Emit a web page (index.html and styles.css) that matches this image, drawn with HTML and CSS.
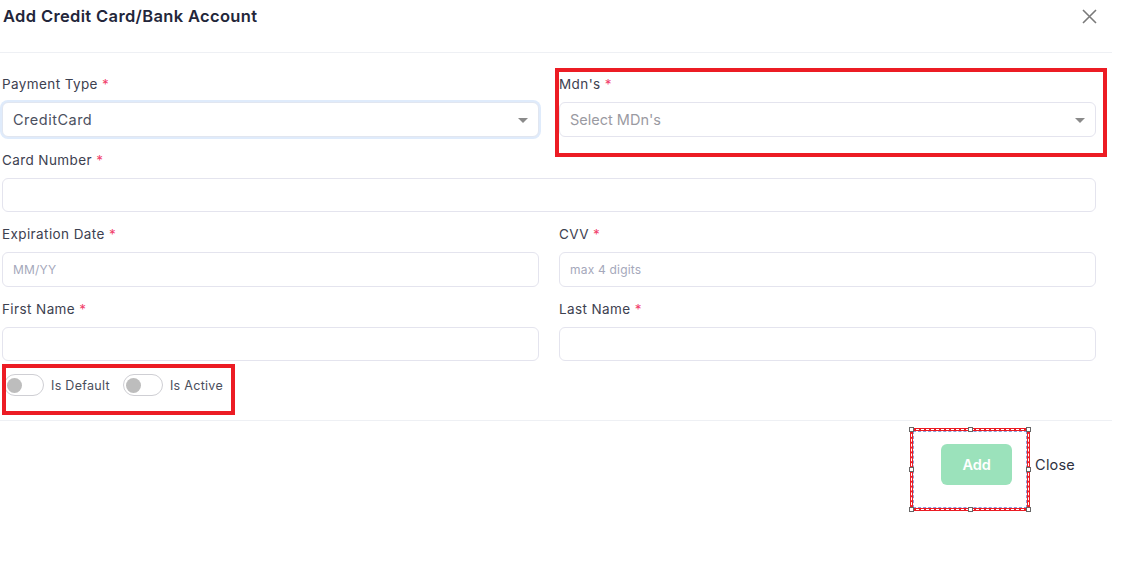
FILE: index.html
```html
<!DOCTYPE html>
<html lang="en">
<head>
    <meta charset="UTF-8">
    <title>Add Credit Card/Bank Account</title>
    <link rel="stylesheet" href="styles.css">
</head>
<body>
    <div class="modal">
        <div class="modal-header">
            <h5>Add Credit Card/Bank Account</h5>
            <button class="btn-close" aria-label="Close">
                <svg width="15" height="15" viewBox="0 0 15 15"><path d="M1 1 L14 14 M14 1 L1 14" stroke="#7a7a7a" stroke-width="1.6" fill="none"/></svg>
            </button>
        </div>

        <div class="modal-body">
            <div class="grid">
                <div class="form-group">
                    <label>Payment Type <span class="req">*</span></label>
                    <div class="select focused">
                        <span class="value">CreditCard</span>
                        <span class="caret"></span>
                    </div>
                </div>
                <div class="form-group">
                    <label>Mdn's <span class="req">*</span></label>
                    <div class="select">
                        <span class="placeholder">Select MDn's</span>
                        <span class="caret"></span>
                    </div>
                </div>
                <div class="form-group wide">
                    <label>Card Number <span class="req">*</span></label>
                    <input type="text">
                </div>
                <div class="form-group">
                    <label>Expiration Date <span class="req">*</span></label>
                    <input type="text" placeholder="MM/YY">
                </div>
                <div class="form-group">
                    <label>CVV <span class="req">*</span></label>
                    <input type="text" placeholder="max 4 digits">
                </div>
                <div class="form-group">
                    <label>First Name <span class="req">*</span></label>
                    <input type="text">
                </div>
                <div class="form-group">
                    <label>Last Name <span class="req">*</span></label>
                    <input type="text">
                </div>
            </div>

            <div class="switches">
                <div class="switch"><span class="track"><span class="knob"></span></span> Is Default</div>
                <div class="switch"><span class="track"><span class="knob"></span></span> Is Active</div>
            </div>
        </div>

        <div class="modal-footer">
            <button class="btn-add">Add</button>
            <button class="btn-link">Close</button>
        </div>
    </div>

    <!-- review markers drawn over the form -->
    <div class="mark mark-mdn"></div>
    <div class="mark mark-switch"></div>
    <div class="select-box">
        <span class="handle h1"></span><span class="handle h2"></span><span class="handle h3"></span>
        <span class="handle h4"></span><span class="handle h5"></span>
        <span class="handle h6"></span><span class="handle h7"></span><span class="handle h8"></span>
    </div>
</body>
</html>
```

FILE: styles.css
```css
* {
    margin: 0;
    padding: 0;
    box-sizing: border-box;
}

body {
    font-family: 'Inter', 'Open Sans', sans-serif;
    background: white;
    color: #3b3f4c;
    width: 1136px;
    height: 569px;
    overflow: hidden;
    position: relative;
}

.modal {
    width: 1112px;
}

.modal-header {
    display: flex;
    justify-content: space-between;
    align-items: flex-start;
    padding: 6px 14px 0 3px;
    height: 53px;
    border-bottom: 1px solid #eef0f4;
}

.modal-header h5 {
    font-size: 16.5px;
    font-weight: 600;
    letter-spacing: 0.35px;
    color: #23263a;
    line-height: 20px;
}

.btn-close {
    background: none;
    border: none;
    margin-top: 3px;
    margin-right: 1px;
}

.modal-body {
    padding: 21px 16px 24px 2px;
}

.grid {
    display: grid;
    grid-template-columns: 1fr 1fr;
    column-gap: 20px;
    row-gap: 12px;
}

.form-group:nth-child(-n+2) {
    margin-bottom: 1px;
}

.wide {
    grid-column: span 2;
}

label {
    display: block;
    font-size: 13.5px;
    letter-spacing: 0.4px;
    line-height: 20px;
    margin-bottom: 8px;
    color: #3d4150;
}

.req {
    color: #f1416c;
}

input, .select {
    width: 100%;
    height: 34.5px;
    border: 1px solid #e4e4ee;
    border-radius: 6px;
    padding: 0 10px;
    font-family: inherit;
    font-size: 12px;
    color: #4b5060;
    background: white;
}

input::placeholder {
    color: #a5a8bb;
    letter-spacing: 0.2px;
}

.select {
    display: flex;
    align-items: center;
    justify-content: space-between;
    padding: 0 10px 0 10px;
    font-size: 14.5px;
}

.select .value {
    letter-spacing: 0.5px;
}

.select.focused {
    border-color: #e1e6f0;
    box-shadow: 0 0 0 2px #dfebfb;
}

.select .placeholder {
    color: #9a9aa2;
}

.caret {
    width: 0;
    height: 0;
    border-left: 5px solid transparent;
    border-right: 5px solid transparent;
    border-top: 5px solid #8a8a8a;
    margin-top: 2px;
}

.switches {
    display: flex;
    align-items: center;
    gap: 13px;
    margin-top: 13px;
    padding-left: 3px;
}

.switch {
    display: flex;
    align-items: center;
    gap: 7px;
    font-size: 12.5px;
    letter-spacing: 0.3px;
    color: #4a4e5c;
}

.track {
    width: 40px;
    height: 22px;
    border: 1px solid #cfcfd4;
    border-radius: 11px;
    display: flex;
    align-items: center;
    padding-left: 2px;
}

.switch:first-child .track {
    margin-left: -1px;
}

.knob {
    width: 15px;
    height: 15px;
    border-radius: 50%;
    background: #bdbdbd;
}

.modal-footer {
    display: flex;
    justify-content: flex-end;
    align-items: center;
    border-top: 1px solid #eef0f4;
    padding: 23px 37px 0 0;
}

.btn-add {
    width: 71px;
    height: 41px;
    background: #9be2bb;
    color: white;
    border: none;
    border-radius: 6px;
    font-family: inherit;
    font-size: 14.5px;
    font-weight: 600;
    margin-right: 23px;
}

.btn-link {
    background: none;
    border: none;
    font-family: inherit;
    font-size: 14.5px;
    letter-spacing: 0.2px;
    color: #2f3241;
}

.mark {
    position: absolute;
    border: 4px solid #ec1c24;
}

.mark-mdn {
    left: 555px;
    top: 68px;
    width: 552px;
    height: 89px;
}

.mark-switch {
    left: 2px;
    top: 364px;
    width: 233px;
    height: 51px;
}

.select-box {
    position: absolute;
    left: 910px;
    top: 428px;
    width: 120px;
    height: 83px;
    border: 3px solid #ec1c24;
}

.select-box::before {
    content: "";
    position: absolute;
    top: -2px;
    left: -2px;
    right: -2px;
    bottom: -2px;
    border: 1px dashed white;
}

.select-box::after {
    content: "";
    position: absolute;
    top: 0;
    left: 0;
    right: 0;
    bottom: 0;
    border: 1px dashed #3a5cc8;
    opacity: 0.6;
}

.handle {
    position: absolute;
    width: 5px;
    height: 5px;
    background: white;
    border: 1px solid #666;
    z-index: 1;
}

.h1 { left: -4px; top: -4px; }
.h2 { left: 55px; top: -4px; }
.h3 { right: -4px; top: -4px; }
.h4 { left: -4px; top: 36px; }
.h5 { right: -4px; top: 36px; }
.h6 { left: -4px; bottom: -4px; }
.h7 { left: 55px; bottom: -4px; }
.h8 { right: -4px; bottom: -4px; }
```
